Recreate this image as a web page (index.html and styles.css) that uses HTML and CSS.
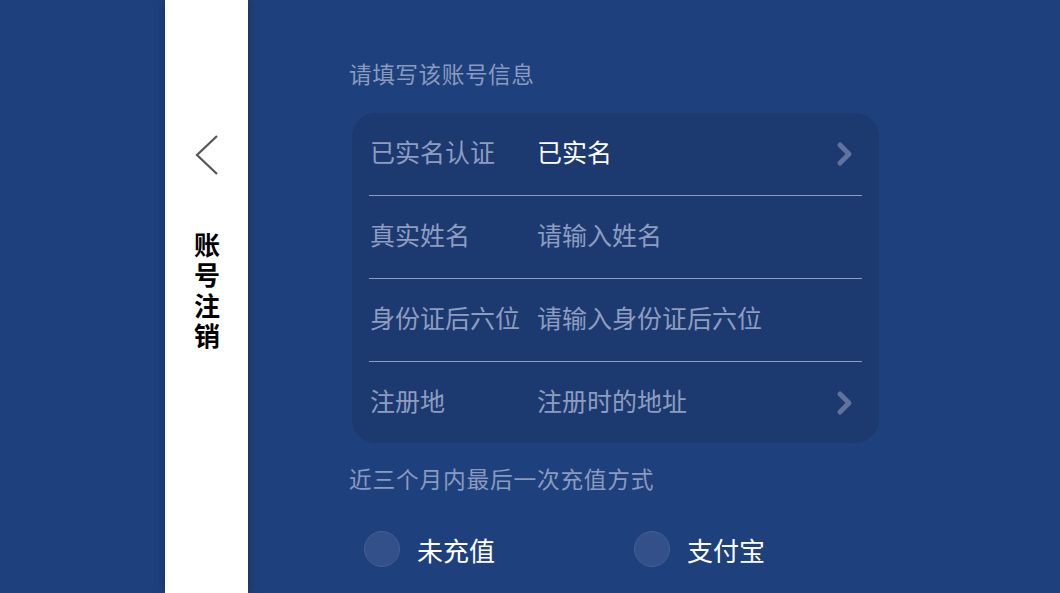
FILE: index.html
```html
<!DOCTYPE html>
<html lang="zh-CN">
<head>
<meta charset="utf-8">
<title>账号注销</title>
<link rel="stylesheet" href="styles.css">
</head>
<body>
<div class="page">
  <div class="gutter"></div>
  <aside class="sidebar">
    <svg class="back" width="26" height="42" viewBox="0 0 26 42"><polyline points="23,2 3,21 23,40" fill="none" stroke="#555" stroke-width="2.2" stroke-linejoin="miter"/></svg>
    <div class="title">账号注销</div>
  </aside>
  <main class="main">
    <div class="section-title">请填写该账号信息</div>
    <div class="card">
      <div class="row">
        <span class="label">已实名认证</span>
        <span class="value filled">已实名</span>
        <svg class="chev" width="18" height="26" viewBox="0 0 18 26"><polyline points="4,4 13,13 4,22" fill="none" stroke="#5f739e" stroke-width="5" stroke-linecap="round" stroke-linejoin="round"/></svg>
      </div>
      <div class="row">
        <span class="label">真实姓名</span>
        <span class="value">请输入姓名</span>
      </div>
      <div class="row">
        <span class="label">身份证后六位</span>
        <span class="value">请输入身份证后六位</span>
      </div>
      <div class="row">
        <span class="label">注册地</span>
        <span class="value">注册时的地址</span>
        <svg class="chev" width="18" height="26" viewBox="0 0 18 26"><polyline points="4,4 13,13 4,22" fill="none" stroke="#5f739e" stroke-width="5" stroke-linecap="round" stroke-linejoin="round"/></svg>
      </div>
    </div>
    <div class="section-title second">近三个月内最后一次充值方式</div>
    <div class="options">
      <label class="option"><span class="radio"></span><span class="opt-text">未充值</span></label>
      <label class="option"><span class="radio"></span><span class="opt-text">支付宝</span></label>
    </div>
  </main>
</div>
</body>
</html>
```
FILE: styles.css
```css
html, body {
  margin: 0;
  padding: 0;
  height: 100%;
  background: #1e407c;
  font-family: "Noto Sans CJK SC", "Noto Sans", sans-serif;
  overflow: hidden;
}
.page {
  display: flex;
  height: 593px;
}
.gutter {
  width: 165px;
  flex: none;
}
.sidebar {
  width: 83px;
  flex: none;
  background: #fff;
  box-shadow: 0 0 10px rgba(0, 0, 0, 0.25);
  display: flex;
  flex-direction: column;
  align-items: center;
  padding-top: 134px;
  box-sizing: border-box;
  position: relative;
  z-index: 1;
}
.back {
  display: block;
  margin-left: 1px;
}
.title {
  margin-top: 56px;
  writing-mode: vertical-rl;
  text-orientation: upright;
  font-size: 26px;
  line-height: 30px;
  letter-spacing: 4.5px;
  font-weight: 700;
  color: #000;
}
.main {
  flex: 1;
  padding-left: 101px;
  padding-top: 57px;
}
.section-title {
  font-size: 22.7px;
  line-height: 34px;
  color: #8a9bbf;
  letter-spacing: 0.5px;
}
.card {
  margin-top: 22px;
  margin-left: 3px;
  width: 527px;
  background: #1c3970;
  border-radius: 24px;
  display: flex;
  flex-direction: column;
  padding: 0 17px;
  box-sizing: border-box;
}
.row {
  height: 76px;
  display: flex;
  align-items: center;
  border-bottom: 1px solid #8a9dc4;
  padding-left: 1px;
  padding-right: 8px;
  padding-bottom: 6px;
}
.row:last-child {
  border-bottom: none;
  height: 75px;
}
.label {
  width: 167px;
  flex: none;
  font-size: 25px;
  color: #8d9dc0;
  white-space: nowrap;
}
.value {
  flex: 1;
  font-size: 25px;
  color: #8d9dc0;
  white-space: nowrap;
}
.value.filled {
  color: #fff;
}
.chev {
  display: block;
  flex: none;
  margin-top: 6px;
}
.section-title.second {
  margin-top: 19px;
  letter-spacing: 0.8px;
}
.options {
  display: flex;
  margin-top: 33px;
  padding-left: 15px;
}
.option {
  width: 270px;
  display: flex;
  align-items: center;
  height: 40px;
}
.radio {
  width: 34px;
  height: 34px;
  border-radius: 50%;
  background: #33508a;
  border: 1px solid #465f93;
  flex: none;
}
.opt-text {
  margin-left: 17px;
  font-size: 26px;
  color: #fff;
}
```
